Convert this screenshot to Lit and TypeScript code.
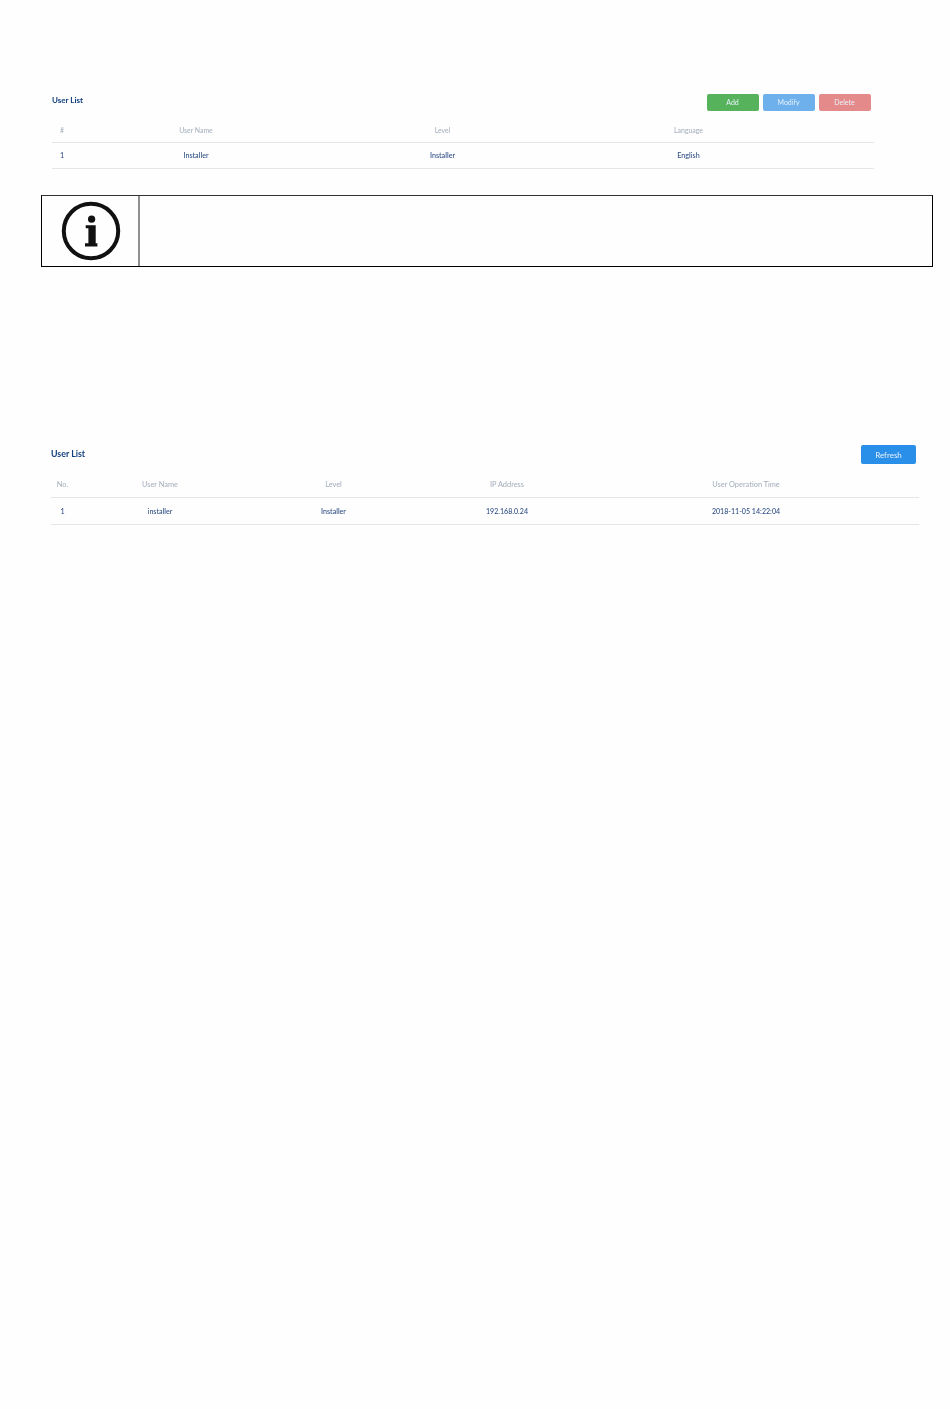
import { LitElement, html, css, svg } from "lit";
import { customElement } from "lit/decorators.js";

const infoIcon = svg`
  <circle cx="30" cy="30" r="27.2" fill="none" stroke="#111" stroke-width="4"/>
  <circle cx="30.6" cy="18.2" r="3.6" fill="#111"/>
  <path d="M24.7 24.3H34.7V42.2H36.4V45.4H24V42.2H27.4V27.3H24.7z" fill="#111"/>`;

@customElement("app-root")
export class AppRoot extends LitElement {
  static styles = css`
    :host {
      display: block;
      min-height: 1409px;
      background: #fefefe;
      font-family: Lato, "Liberation Sans", sans-serif;
      box-sizing: border-box;
      padding-top: 93px;
    }
    .list { filter: blur(0.4px); }
    .first { margin-left: 52px; width: 822px; }
    .second { margin-left: 51px; width: 868px; margin-top: 178px; }
    .toolbar { display: flex; justify-content: space-between; align-items: center; }
    .first .toolbar { height: 18px; padding-right: 3.5px; }
    .second .toolbar { height: 19px; padding-right: 3px; }
    .title { color: #123f7c; font-weight: 700; }
    .first .title { font-size: 8px; margin-top: -5px; }
    .second .title { font-size: 8.8px; margin-top: -2px; }
    .buttons { display: flex; gap: 4px; }
    .btn {
      display: flex;
      align-items: center;
      justify-content: center;
      color: #e8f2fb;
      border-radius: 2px;
    }
    .first .btn { width: 52px; height: 17px; font-size: 7px; }
    .second .btn { width: 55px; height: 19px; font-size: 8px; }
    .add { background: #56b35c; }
    .modify { background: #6db0ec; }
    .delete { background: #e58a8a; }
    .refresh { background: #2a8fe8; }
    .row { display: grid; align-items: center; text-align: center; }
    .first .row { grid-template-columns: 20px 248px 245px 247px 1fr; }
    .second .row { grid-template-columns: 23px 172px 175px 172px 306px 1fr; }
    .head { color: #a3adbb; border-bottom: 1px solid #e3e5e8; }
    .body { color: #2f4f85; border-bottom: 1px solid #e3e5e8; font-weight: 500; }
    .first .head { height: 24px; margin-top: 7px; font-size: 6.9px; }
    .first .body { height: 25px; font-size: 7.2px; }
    .second .head { height: 25px; padding-top: 8px; font-size: 7.4px; }
    .second .body { height: 26px; font-size: 7.1px; }
    .note {
      display: grid;
      grid-template-columns: 98px 1fr;
      box-sizing: border-box;
      margin: 26px 0 0 41px;
      width: 892px;
      height: 72px;
      border: 1px solid #000;
      border-top-color: #333;
    }
    .note-icon {
      display: flex;
      align-items: center;
      justify-content: center;
      border-right: 2px solid #8f8f8f;
      box-sizing: border-box;
      padding-left: 2px;
    }
    .note-icon svg { width: 60px; height: 60px; display: block; }
  `;

  render() {
    return html`
      <section class="list first">
        <div class="toolbar">
          <div class="title">User List</div>
          <div class="buttons">
            <div class="btn add">Add</div>
            <div class="btn modify">Modify</div>
            <div class="btn delete">Delete</div>
          </div>
        </div>
        <div class="row head">
          <span>#</span><span>User Name</span><span>Level</span><span>Language</span>
        </div>
        <div class="row body">
          <span>1</span><span>Installer</span><span>Installer</span><span>English</span>
        </div>
      </section>
      <div class="note">
        <div class="note-icon"><svg viewBox="0 0 60 60">${infoIcon}</svg></div>
        <div></div>
      </div>
      <section class="list second">
        <div class="toolbar">
          <div class="title">User List</div>
          <div class="btn refresh">Refresh</div>
        </div>
        <div class="row head">
          <span>No.</span><span>User Name</span><span>Level</span><span>IP Address</span><span>User Operation Time</span>
        </div>
        <div class="row body">
          <span>1</span><span>installer</span><span>Installer</span><span>192.168.0.24</span><span>2018-11-05 14:22:04</span>
        </div>
      </section>
    `;
  }
}
